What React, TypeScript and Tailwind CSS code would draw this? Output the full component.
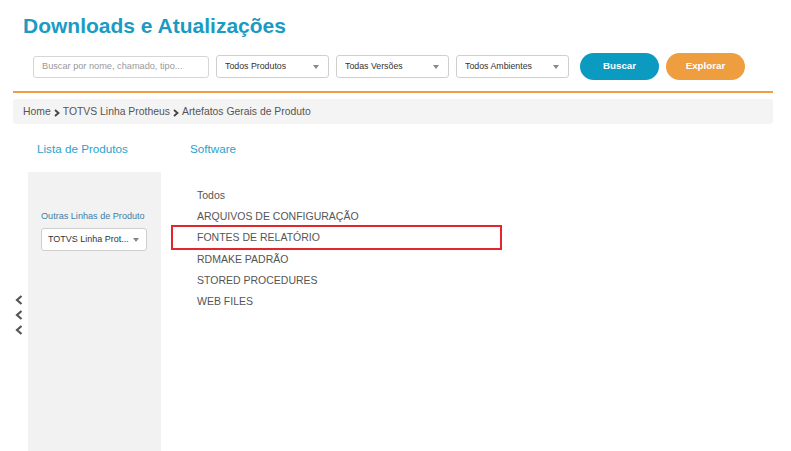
import React from "react";

const Caret = () => (
  <svg width="6" height="4" viewBox="0 0 6 4" className="shrink-0">
    <path d="M0 0h6L3 4z" fill="#888" />
  </svg>
);

const Select = ({ label, w }: { label: string; w: string }) => (
  <div
    className={`${w} h-[23px] flex items-center justify-between pl-[8px] pr-[9px] border border-[#cfcfcf] rounded-[3px] bg-white text-[8.8px] text-[#333]`}
  >
    <span className="truncate">{label}</span>
    <Caret />
  </div>
);

const Chevron = () => (
  <svg width="8" height="10" viewBox="0 0 8 10">
    <path d="M6.5 1L2 5l4.5 4" fill="none" stroke="#555" strokeWidth="2.2" />
  </svg>
);

const Sep = () => (
  <svg width="6" height="8" viewBox="0 0 6 8" className="mx-[3px] mt-[2px]">
    <path d="M1 1l3.5 3L1 7" fill="none" stroke="#444" strokeWidth="1.8" />
  </svg>
);

const categories = [
  "Todos",
  "ARQUIVOS DE CONFIGURAÇÃO",
  "FONTES DE RELATÓRIO",
  "RDMAKE PADRÃO",
  "STORED PROCEDURES",
  "WEB FILES",
];

export default function App() {
  return (
    <div
      className="w-[791px] h-[451px] overflow-hidden bg-white flex flex-col"
      style={{ fontFamily: '"Liberation Sans", Arial, sans-serif' }}
    >
      <h1 className="pt-[11px] pl-[23px] text-[21px] leading-[30px] font-bold text-[#1a9bc3]">
        Downloads e Atualizações
      </h1>

      <div className="flex items-center pl-[33px] mt-[12px]">
        <div className="w-[176px] h-[22px] flex items-center px-[8px] border border-[#d6d6d6] rounded-[3px] text-[9.2px] text-[#999]">
          Buscar por nome, chamado, tipo...
        </div>
        <div className="flex gap-[7px] ml-[7px]">
          <Select label="Todos Produtos" w="w-[113px]" />
          <Select label="Todas Versões" w="w-[113px]" />
          <Select label="Todos Ambientes" w="w-[113px]" />
        </div>
        <button className="ml-[11px] w-[79px] h-[27px] rounded-full bg-[#0b9bc0] text-white text-[9.8px] font-bold">
          Buscar
        </button>
        <button className="ml-[7px] w-[79px] h-[27px] rounded-full bg-[#ee9e3e] text-white text-[9.8px] font-bold">
          Explorar
        </button>
      </div>

      <div className="ml-[13px] w-[760px] mt-[11px] h-[2px] bg-[#f39c48]" />

      <div className="ml-[13px] w-[760px] mt-[6px] h-[25px] bg-[#f4f4f4] rounded-[3px] flex items-center pl-[10px] text-[10.4px] text-[#555]">
        <span>Home</span>
        <Sep />
        <span>TOTVS Linha Protheus</span>
        <Sep />
        <span>Artefatos Gerais de Produto</span>
      </div>

      <div className="flex mt-[17px] text-[11.7px] leading-[16px] text-[#2aa3cc]">
        <span className="ml-[37px] w-[153px]">Lista de Produtos</span>
        <span>Software</span>
      </div>

      <div className="flex flex-1 mt-[15px]">
        <div className="w-[28px] flex flex-col items-center pt-[123px] pl-[10px] gap-[5px]">
          <Chevron />
          <Chevron />
          <Chevron />
        </div>
        <div className="w-[133px] bg-[#f2f2f2] pt-[38px] pl-[13px]">
          <div className="text-[9.1px] text-[#3c7fa8] leading-[13px] whitespace-nowrap">
            Outras Linhas de Produto
          </div>
          <div className="mt-[5px] w-[106px] h-[23px] bg-white border border-[#cfcfcf] rounded-[3px] flex items-center justify-between pl-[6px] pr-[7px] text-[9px] text-[#333]">
            <span className="whitespace-nowrap">TOTVS Linha Prot...</span>
            <Caret />
          </div>
        </div>
        <ul className="ml-[10px] pt-[13px] text-[10.5px] text-[#555]">
          {categories.map((c) => (
            <li
              key={c}
              className={
                c === "FONTES DE RELATÓRIO"
                  ? "w-[331px] h-[25px] -mt-[2px] -mb-[1px] flex items-center pl-[24px] border-2 border-[#e3262c]"
                  : "h-[21px] flex items-center pl-[26px]"
              }
            >
              {c}
            </li>
          ))}
        </ul>
      </div>
    </div>
  );
}
